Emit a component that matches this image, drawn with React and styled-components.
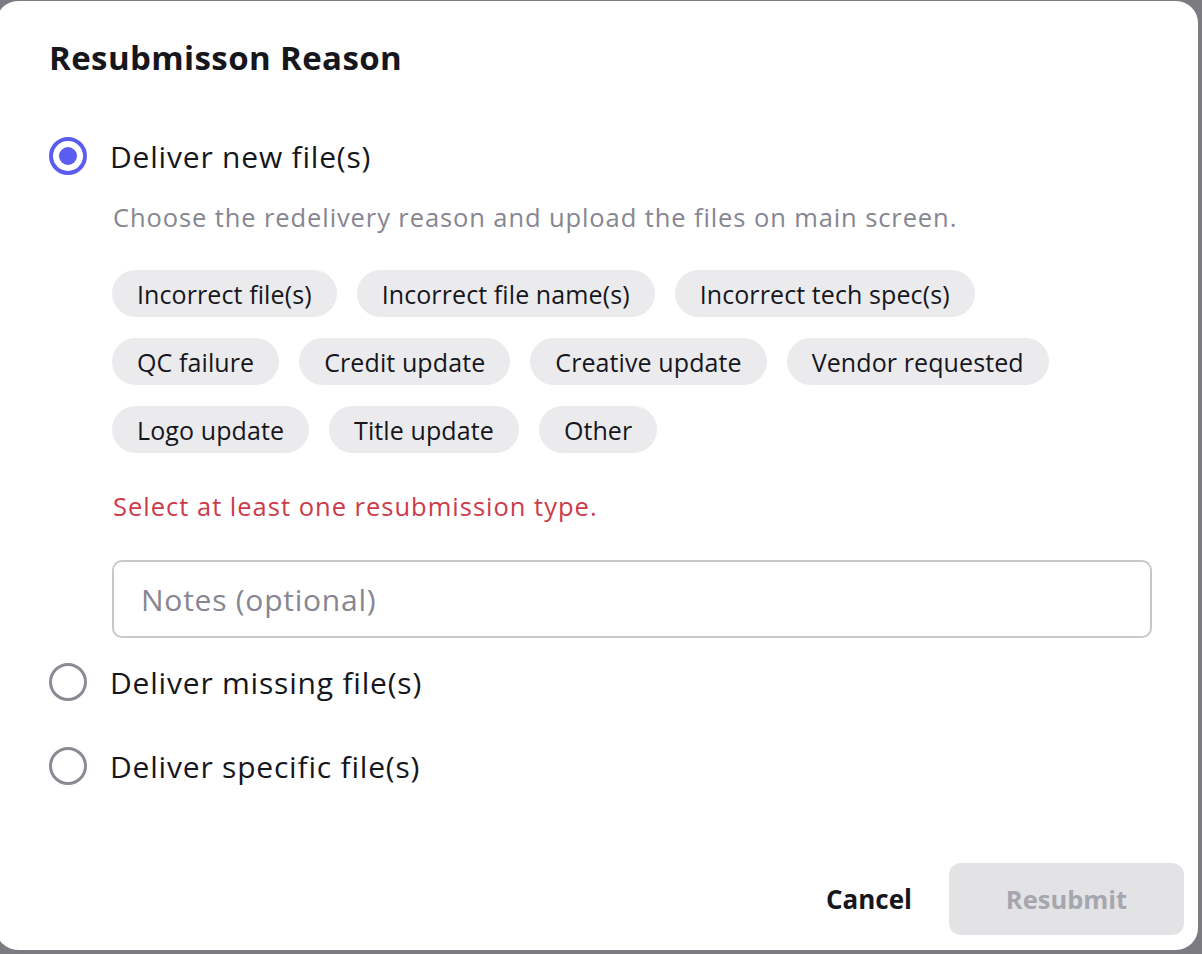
import React from "react";
import styled, { createGlobalStyle } from "styled-components";

const Global = createGlobalStyle`
  html, body { margin: 0; padding: 0; background: #7c7b81; }
  body { font-family: "Open Sans", "Liberation Sans", sans-serif; overflow: hidden; }
  * { box-sizing: border-box; }
`;

const Page = styled.div`
  width: 1202px;
  height: 954px;
  padding-top: 1px;
  overflow: hidden;
`;

const Modal = styled.div`
  margin-left: -4px;
  width: 1202px;
  height: 949px;
  background: #ffffff;
  border-radius: 22px;
  display: flex;
  flex-direction: column;
  padding: 37px 14px 15px 53px;
`;

const Title = styled.h2`
  margin: 0;
  height: 40px;
  line-height: 40px;
  font-size: 33px;
  font-weight: 700;
  color: #16161d;
  letter-spacing: 0.4px;
  white-space: nowrap;
`;

const RadioRow = styled.label`
  display: flex;
  align-items: center;
  gap: 23px;
  height: 40px;
  margin-top: ${(p) => p.$mt}px;
  font-size: 30px;
  letter-spacing: 0.8px;
  color: #16161d;
  cursor: pointer;
  white-space: nowrap;
`;

const RadioCircle = styled.span`
  width: 38px;
  height: 38px;
  border-radius: 50%;
  border: ${(p) => (p.$checked ? "4px solid #5a5df0" : "3.5px solid #8b8b95")};
  display: flex;
  align-items: center;
  justify-content: center;
  flex: none;
  &::after {
    content: "";
    display: ${(p) => (p.$checked ? "block" : "none")};
    width: 18px;
    height: 18px;
    border-radius: 50%;
    background: #5a5df0;
  }
`;

const Indented = styled.div`
  padding-left: 63px;
  display: flex;
  flex-direction: column;
`;

const Hint = styled.p`
  margin: 25px 0 0 1px;
  line-height: 32px;
  font-size: 25.5px;
  letter-spacing: 0.9px;
  color: #868691;
  white-space: nowrap;
`;

const Chips = styled.div`
  margin-top: 37px;
  display: flex;
  flex-wrap: wrap;
  gap: 21px 20px;
  max-width: 1040px;
`;

const Chip = styled.button`
  height: 47px;
  padding: 0 25px;
  border: none;
  border-radius: 24px;
  background: #ebebee;
  color: #16161d;
  font-family: inherit;
  font-size: 25px;
  letter-spacing: 0.1px;
  white-space: nowrap;
  cursor: pointer;
`;

const ErrorText = styled.p`
  margin: 37px 0 0 1px;
  line-height: 32px;
  font-size: 25.5px;
  letter-spacing: 1px;
  color: #cc3b4a;
  white-space: nowrap;
`;

const Notes = styled.input`
  margin-top: 38px;
  width: 1040px;
  height: 78px;
  border: 2px solid #c8c8ca;
  border-radius: 10px;
  padding: 0 27px;
  font-family: inherit;
  font-size: 30px;
  letter-spacing: 0.75px;
  color: #16161d;
  outline: none;
  &::placeholder { color: #868692; }
`;

const Footer = styled.div`
  margin-top: auto;
  display: flex;
  justify-content: flex-end;
  align-items: center;
`;

const CancelButton = styled.button`
  border: none;
  background: none;
  padding: 0;
  margin-right: 37px;
  font-family: inherit;
  font-size: 26px;
  font-weight: 700;
  color: #16161d;
  cursor: pointer;
`;

const SubmitButton = styled.button`
  width: 235px;
  height: 72px;
  border: none;
  border-radius: 12px;
  background: #e3e3e6;
  color: #a6a6ae;
  font-family: inherit;
  font-size: 25.5px;
  font-weight: 700;
`;

const reasons = [
  "Incorrect file(s)",
  "Incorrect file name(s)",
  "Incorrect tech spec(s)",
  "QC failure",
  "Credit update",
  "Creative update",
  "Vendor requested",
  "Logo update",
  "Title update",
  "Other",
];

export default function App() {
  return (
    <Page>
      <Global />
      <Modal>
        <Title>Resubmisson Reason</Title>
        <RadioRow $mt={58}>
          <RadioCircle $checked />
          Deliver new file(s)
        </RadioRow>
        <Indented>
          <Hint>Choose the redelivery reason and upload the files on main screen.</Hint>
          <Chips>
            {reasons.map((r) => (
              <Chip key={r}>{r}</Chip>
            ))}
          </Chips>
          <ErrorText>Select at least one resubmission type.</ErrorText>
          <Notes placeholder="Notes (optional)" />
        </Indented>
        <RadioRow $mt={24}>
          <RadioCircle />
          Deliver missing file(s)
        </RadioRow>
        <RadioRow $mt={44}>
          <RadioCircle />
          Deliver specific file(s)
        </RadioRow>
        <Footer>
          <CancelButton>Cancel</CancelButton>
          <SubmitButton disabled>Resubmit</SubmitButton>
        </Footer>
      </Modal>
    </Page>
  );
}
